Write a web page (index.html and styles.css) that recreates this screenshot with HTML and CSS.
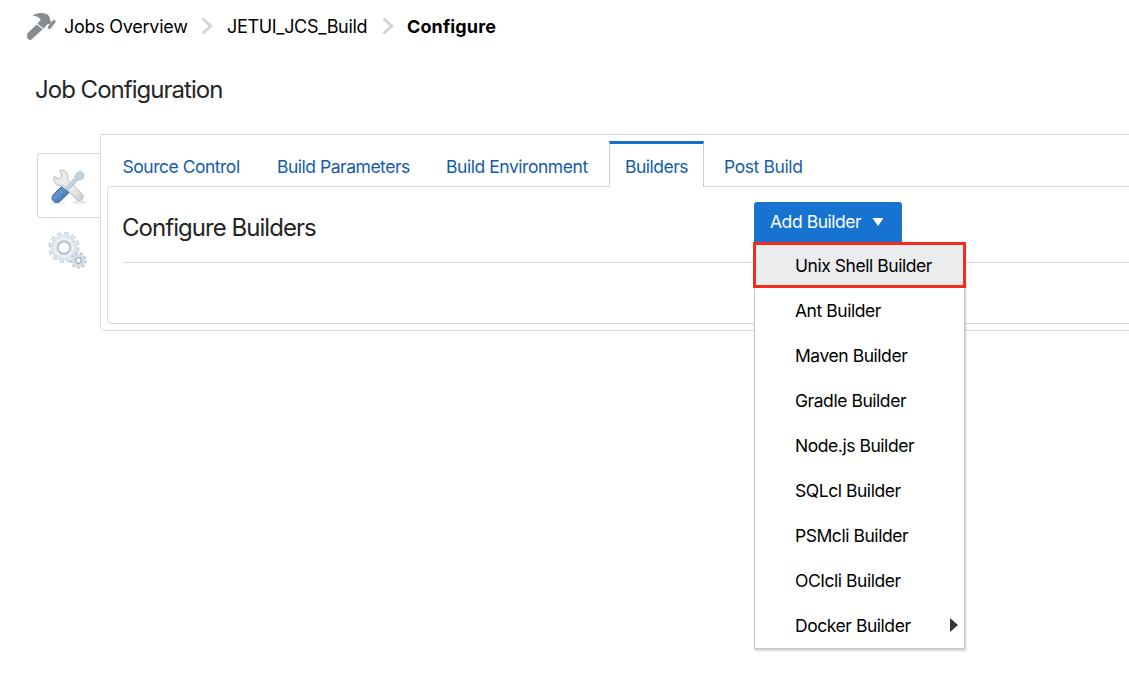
FILE: index.html
```html
<!DOCTYPE html>
<html lang="en">
<head>
<meta charset="utf-8">
<title>Job Configuration</title>
<link rel="stylesheet" href="styles.css">
</head>
<body>
<nav class="crumbs">
  <svg class="hammer" width="30" height="30" viewBox="0 0 30 30">
    <path fill="#868c90" d="M6.800 4.800C10 1.500 17 1 21.500 3.500Q24.300 5.500 24 9.500L25.500 11l-2 2.800-1.500-1-4.300 4.700-6.200-4.800 3.300-4.200C12.500 5.800 10 5 6.800 4.800z"/>
    <path d="M28 10.500l-4.600 6" stroke="#868c90" stroke-width="3.200" stroke-linecap="round"/>
    <path fill="#868c90" d="M10.700 13.600l6 4.700L5.200 28.700Q3.500 30 1.200 27V22.500z"/>
  </svg>
  <a class="crumb crumb-jobs">Jobs Overview</a>
  <svg class="sep" width="12" height="18" viewBox="0 0 12 18"><path d="M1.500 1.500L9.700 9l-8.200 7.500" fill="none" stroke="#d5d6d8" stroke-width="3"/></svg>
  <a class="crumb crumb-build">JETUI_JCS_Build</a>
  <svg class="sep" width="12" height="18" viewBox="0 0 12 18"><path d="M1.500 1.500L9.700 9l-8.200 7.500" fill="none" stroke="#d5d6d8" stroke-width="3"/></svg>
  <b class="crumb crumb-current">Configure</b>
</nav>
<h1 class="title">Job Configuration</h1>
<main class="workspace">
  <aside class="side">
    <div class="side-tab side-tab-active">
      <svg width="40" height="40" viewBox="0 0 40 40">
        <defs>
          <linearGradient id="metal" x1="0" y1="0" x2="1" y2="1"><stop offset="0" stop-color="#e6e6e6"/><stop offset=".6" stop-color="#efefef"/><stop offset="1" stop-color="#c9c9c9"/></linearGradient>
          <linearGradient id="grip" x1="0" y1="0" x2="1" y2="1"><stop offset="0" stop-color="#3468a8"/><stop offset=".4" stop-color="#6596cc"/><stop offset="1" stop-color="#2c5b99"/></linearGradient>
        </defs>
        <ellipse cx="10" cy="36" rx="8" ry="1.800" fill="#eee"/><ellipse cx="32" cy="35" rx="7" ry="1.800" fill="#e8e8e8"/>
        <path fill="url(#metal)" stroke="#bcbcbc" d="M6 9.500l4.500 2.500L14 9.500 12 3.500C16 1.500 21 5.500 19.500 12L34.500 27.500c2.500 4-2 7.500-5.500 5.500L15 18C9 20 4.500 15 6 9.500z"/>
        <path d="M19 22L30 10" stroke="#b4bfcc" stroke-width="4.500"/><path d="M19 21.500L30 9.500" stroke="#c8d1de" stroke-width="3"/>
        <path fill="#c3d3df" stroke="#b8c7d2" d="M27 9l2-3 4-2 3 3-.5 4-4 2-2.500.500z"/>
        <path fill="url(#grip)" stroke="#386ba7" d="M13.500 19.500l7.500 6L12 34.500C7.500 37.500 2.500 33.500 4.500 28.500z"/>
      </svg>
    </div>
    <div class="side-tab side-tab-gears">
      <svg width="42" height="40" viewBox="0 0 42 40">
        <circle cx="16" cy="16.500" r="13.500" fill="none" stroke="#c0ced9" stroke-width="4" stroke-dasharray="4.200 2.869"/>
        <circle cx="16" cy="16.500" r="13" fill="none" stroke="#dfe8ef" stroke-width="3" stroke-dasharray="3 3.807" stroke-dashoffset="-.5"/>
        <circle cx="16" cy="16.500" r="9.500" fill="none" stroke="#d8e3eb" stroke-width="7"/>
        <circle cx="16" cy="16.500" r="9.300" fill="none" stroke="#eaf0f5" stroke-width="2.500"/>
        <circle cx="16" cy="16.500" r="6" fill="#fff" stroke="#adb8c1" stroke-width="1.300"/>
        <circle cx="30.500" cy="29.500" r="6.800" fill="none" stroke="#b9c9d4" stroke-width="3" stroke-dasharray="2.700 2.047"/>
        <circle cx="30.500" cy="29.500" r="4.600" fill="none" stroke="#d3dfe8" stroke-width="4"/>
        <circle cx="30.500" cy="29.500" r="2.800" fill="#fff" stroke="#a5b4c0" stroke-width="1.300"/>
      </svg>
    </div>
  </aside>
  <section class="panel">
    <div class="tabs">
      <a class="tab tab-source"><span>Source Control</span></a>
      <a class="tab tab-params"><span>Build Parameters</span></a>
      <a class="tab tab-env"><span>Build Environment</span></a>
      <a class="tab tab-active"><span>Builders</span></a>
      <a class="tab tab-post"><span>Post Build</span></a>
    </div>
    <div class="content">
      <header class="content-head">
        <h2 class="subtitle">Configure Builders</h2>
        <div class="add">
          <button class="add-button"><span>Add Builder</span><svg width="12" height="8" viewBox="0 0 12 8"><path d="M.5 0h11L6 8z" fill="#fff"/></svg></button>
          <ul class="menu">
            <li class="item item-active"><span>Unix Shell Builder</span></li>
            <li class="item"><span>Ant Builder</span></li>
            <li class="item"><span>Maven Builder</span></li>
            <li class="item"><span>Gradle Builder</span></li>
            <li class="item"><span>Node.js Builder</span></li>
            <li class="item"><span>SQLcl Builder</span></li>
            <li class="item"><span>PSMcli Builder</span></li>
            <li class="item"><span>OCIcli Builder</span></li>
            <li class="item"><span>Docker Builder</span><svg class="more" width="8" height="14" viewBox="0 0 8 14"><path d="M0 0l8 7-8 7z" fill="#333638"/></svg></li>
          </ul>
        </div>
      </header>
    </div>
  </section>
</main>
</body>
</html>
```
FILE: styles.css
```css
* { box-sizing: border-box; }
body {
  margin: 0;
  height: 674px;
  overflow: hidden;
  background: #fff;
  color: #000;
  font: 17.5px/24px Inter, "Liberation Sans", sans-serif;
  letter-spacing: -0.45px;
  white-space: nowrap;
}
.crumbs { display: flex; align-items: center; height: 52px; padding-left: 26px; }
.hammer { margin: -1px 8px 0 0; flex: none; }
.crumb { flex: none; padding-top: 1px; font-size: 18px; letter-spacing: -0.27px; }
.crumb-jobs { width: 137px; }
.crumb-build { width: 155px; letter-spacing: -0.33px; }
.sep { width: 12px; margin-right: 14px; flex: none; }
.crumb-current { margin-left: -1px; font-weight: 700; letter-spacing: 0.12px; }
.title {
  margin: 22px 0 0 35px;
  font-size: 24px;
  line-height: 32px;
  font-weight: 400;
  color: #252525;
  letter-spacing: -0.98px;
}
.workspace { display: flex; width: 1150px; margin-top: 28px; padding-left: 37px; }
.side { width: 63px; padding-top: 19px; flex: none; }
.side-tab { display: flex; width: 63px; height: 65px; padding: 13px 0 0 10px; }
.side-tab-active { border: 1px solid #d2dbe2; border-right: 0; border-radius: 3px 0 0 3px; }
.side-tab-gears { padding: 13px 0 0 11px; }
.panel { flex: 1; height: 197px; padding: 6px 0 0 6px; border: 1px solid #d2dbe2; border-radius: 0 0 0 4px; }
.tabs { display: flex; height: 46px; padding-left: 2px; color: #145ca8; }
.tab { display: flex; align-items: center; height: 45px; padding: 7px 0 0 14px; flex: none; }
.tab-source { width: 154px; padding-left: 13.5px; letter-spacing: -0.48px; }
.tab-params { width: 169px; letter-spacing: -0.48px; }
.tab-env { width: 177px; }
.tab-active {
  width: 95px;
  height: 46px;
  padding: 2px 0 0 15px;
  border: solid #c4ced7;
  border-width: 0 1px;
  border-top: 3px solid #1470cc;
  background: #fff;
  z-index: 1;
  letter-spacing: -0.5px;
}
.tab-post { padding-left: 20px; letter-spacing: -0.4px; }
.content { height: 138px; margin-top: -1px; padding: 15px 0 0 15px; border: 1px solid #d2dbe2; border-radius: 4px 0 0 4px; }
.content-head { display: flex; height: 61px; border-bottom: 1px solid #d2dbe2; }
.subtitle { width: 632px; margin: 10px 0 0 -1px; font-size: 24px; line-height: 32px; font-weight: 400; color: #252525; letter-spacing: -0.96px; }
.add { position: relative; width: 148px; }
.add-button {
  display: flex;
  align-items: center;
  width: 148px;
  height: 40px;
  padding: 0 0 0 16px;
  border: 0;
  border-radius: 3px 3px 0 0;
  background: #1673cf;
  color: #fff;
  font: inherit;
  letter-spacing: inherit;
}
.add-button span { width: 102px; text-align: left; }
.menu {
  position: absolute;
  z-index: 2;
  top: 40px;
  left: 0;
  width: 211px;
  height: 407px;
  margin: 0;
  padding: 0;
  border: 1px solid #bdc8d1;
  background: #fff;
  box-shadow: 1px 2px 2px rgba(0, 0, 0, .18);
  list-style: none;
}
.item { display: flex; align-items: center; justify-content: space-between; height: 45px; padding: 0 6px 0 40px; }
.item-active { width: 213px; height: 46px; margin: -1px 0 0 -2px; padding: 2px 0 0 39px; border: 2.5px solid #f32c1e; background: #ebecee; }
.item-active { border-width: 3px; }
.more { margin-top: -1px; }
```
